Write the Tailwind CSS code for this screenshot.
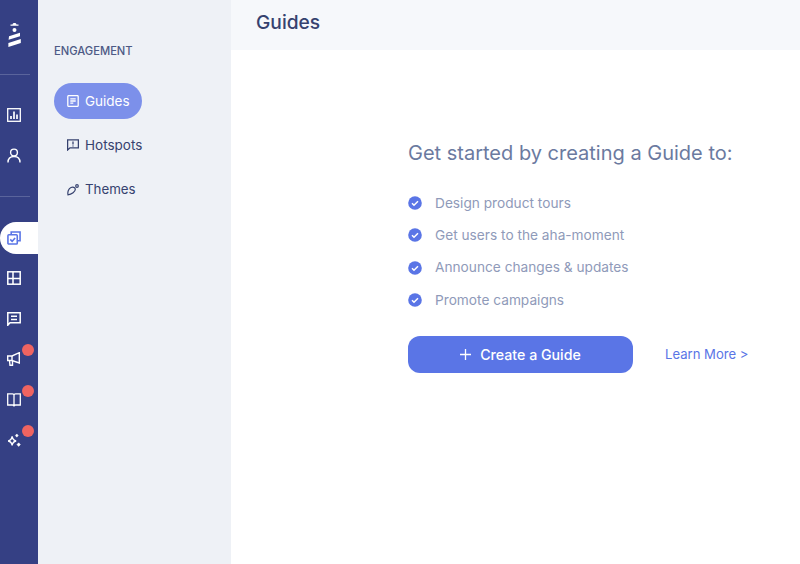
<!DOCTYPE html>
<html lang="en">
<head>
  <meta charset="UTF-8" />
  <title>Guides</title>
  <script src="https://cdn.jsdelivr.net/npm/@tailwindcss/browser@4"></script>
</head>
<body class="font-['Inter',sans-serif] bg-white">
<div class="flex h-[564px] w-[800px] overflow-hidden">

  <!-- icon rail -->
  <div class="w-[38px] shrink-0 bg-[#354084] flex flex-col">
    <div class="h-[75px] mr-2 border-b border-[#5a649c] flex items-start justify-center pr-[2px] pt-[22px] shrink-0">
      <svg width="13" height="25" viewBox="0 0 13 25" fill="#fff">
        <path d="M2.500 3.800H10.500V2.400H8.500C8 .6 5 .6 4.500 2.400H2.500Z"/>
        <path d="M6.500 6A2 2 0 1 1 6.490 10A2 2 0 1 1 6.500 6Z"/>
        <path d="M1 14.200L12 10.800V14.200L.6 17.800Z"/>
        <path d="M.4 21L12.800 17V21L.4 25Z"/>
      </svg>
    </div>
    <div class="h-[122px] mr-2 border-b border-[#5a649c] flex flex-col items-center pr-[2px] pt-[33px] gap-[26px] shrink-0">
      <svg width="14" height="14" viewBox="0 0 14 14" fill="none" stroke="#fff" stroke-width="1.300"><rect x=".7" y=".7" width="12.600" height="12.600"/><path d="M4 11V8M7 11V3.500M10 11V6.500" stroke-width="1.700"/></svg>
      <svg width="14" height="15" viewBox="0 0 14 15" fill="none" stroke="#fff" stroke-width="1.400"><circle cx="7" cy="4.500" r="3.400"/><path d="M1 14.500C1 10.500 3.500 8.500 7 8.500S13 10.500 13 14.500"/></svg>
    </div>

    <!-- active tab -->
    <div class="mt-[25px] h-[32px] w-[38px] bg-white rounded-l-[16px] flex items-center justify-center pr-[10px] shrink-0">
      <svg width="14" height="14" viewBox="0 0 15 15" fill="none" stroke="#5a75e6" stroke-width="1.700"><path d="M4.500 3.500V1h9.500v9.500H11.500"/><rect x="1" y="4" width="10" height="10" rx="1"/><path d="M3.500 9l2 2 3.200-3.600"/></svg>
    </div>

    <div class="flex flex-col items-center pr-[10px] mt-[17px] gap-[26.500px]">
      <svg width="14" height="14" viewBox="0 0 14 14" fill="none" stroke="#fff" stroke-width="1.500"><rect x=".8" y=".8" width="12.400" height="12.400"/><path d="M6 .8v12.400M.8 7.500H13.200"/></svg>
      <svg width="14" height="14" viewBox="0 0 14 14" fill="none" stroke="#fff" stroke-width="1.500"><path d="M.8.800h12.400v10H3L.8 13.200Z"/><path d="M4 4.200h6M4 7.400h6"/></svg>
      <div class="relative flex justify-center w-[14px] h-[14px]">
        <svg width="14" height="14" viewBox="0 0 14 14" fill="none" stroke="#fff" stroke-width="1.400"><path d="M.7 4H5l7.300-3.300V11L5 8.500H.7Z"/><path d="M2.500 8.500L3 13.300H5.500V8.500M5 4v4.500"/></svg>
        <span class="absolute left-[15px] top-[-8px] w-[12px] h-[12px] rounded-full bg-[#ef6461]"></span>
      </div>
      <div class="relative flex justify-center w-[14px] h-[14px]">
        <svg width="14" height="14" viewBox="0 0 14 14" fill="none" stroke="#fff" stroke-width="1.300"><path d="M.7.800H5.500C6.400.8 7 1.400 7 2.300V13.400C7 12.600 6.400 12 5.500 12H.7ZM13.300.8H8.500C7.600.8 7 1.400 7 2.300V13.400C7 12.600 7.600 12 8.500 12H13.300Z"/></svg>
        <span class="absolute left-[15px] top-[-8px] w-[12px] h-[12px] rounded-full bg-[#ef6461]"></span>
      </div>
      <div class="relative flex justify-center w-[14px] h-[14px]">
        <svg width="15" height="15" viewBox="0 0 15 15" fill="none" stroke="#fff" stroke-width="1.500"><path d="M5.500 3.200C6 6.200 6.800 7.500 9.800 8C6.800 8.500 6 9.800 5.500 12.800C5 9.800 4.200 8.500 1.200 8C4.200 7.500 5 6.200 5.500 3.200Z"/><path d="M10.500 .5L12 2.200L10.500 3.900L9 2.200ZM12.500 10L14.300 11.900L12.500 13.800L10.700 11.900Z" fill="#fff" stroke-width=".6"/></svg>
        <span class="absolute left-[15px] top-[-8px] w-[12px] h-[12px] rounded-full bg-[#ef6461]"></span>
      </div>
    </div>
  </div>

  <!-- secondary nav -->
  <div class="w-[193px] shrink-0 bg-[#eef1f6] pl-[16px]">
    <div class="mt-[44px] text-[11.200px] leading-[14px] font-medium text-[#4d5a85]">ENGAGEMENT</div>
    <div class="mt-[25px] flex flex-col gap-[8px]">
      <div class="h-[36px] w-[88px] rounded-full bg-[#7c90ea] flex items-center pl-[13px] gap-[6px] text-white text-[13.500px]">
        <svg width="12" height="12" viewBox="0 0 12 12" fill="none" stroke="#fff" stroke-width="1.300"><rect x=".8" y=".6" width="10.400" height="10.800" rx="1"/><path d="M3.300 3.800h5.400M3.300 6h5.400M3.300 8.200h3"/></svg>
        Guides
      </div>
      <div class="h-[36px] flex items-center pl-[13px] gap-[6px] text-[#36426f] text-[13.500px]">
        <svg width="12" height="12" viewBox="0 0 12 12" fill="none" stroke="#36426f" stroke-width="1.300"><path d="M.6.800h10.800v8H3L.6 11Z"/><path d="M6 2.500v3M6 6.500v1"/></svg>
        Hotspots
      </div>
      <div class="h-[36px] pt-[1px] flex items-center pl-[13px] gap-[6px] text-[#36426f] text-[13.300px]">
        <svg width="12" height="12" viewBox="0 0 12 12" fill="none" stroke="#36426f" stroke-width="1.200"><path d="M1 10.800C.4 8 1.500 4.500 4 3.500C6 2.700 8 3.300 8.300 5C8.600 7.500 4.500 10.800 1 10.800Z"/><circle cx="10" cy="2" r="1.300"/></svg>
        Themes
      </div>
    </div>
  </div>

  <!-- main -->
  <div class="flex-1 flex flex-col">
    <div class="h-[50px] bg-[#f6f8fb] pl-[25px] pb-[5px] flex items-center text-[19.200px] font-medium text-[#36426f]">Guides</div>
    <div class="pl-[177px] pt-[90px]">
      <div class="text-[20px] leading-[26px] text-[#6b7a9f]">Get started by creating a Guide to:</div>
      <div class="mt-[27px] flex flex-col gap-[12.300px] text-[13.700px] text-[#8f9ab9]">
        <div class="h-[20px] flex items-center gap-[13px]"><svg width="14" height="14" viewBox="0 0 14 14"><circle cx="7" cy="7" r="6.800" fill="#5a75e6"/><path d="M4 7.200l2 2 4-4" fill="none" stroke="#fff" stroke-width="1.500"/></svg>Design product tours</div>
        <div class="h-[20px] flex items-center gap-[13px]"><svg width="14" height="14" viewBox="0 0 14 14"><circle cx="7" cy="7" r="6.800" fill="#5a75e6"/><path d="M4 7.200l2 2 4-4" fill="none" stroke="#fff" stroke-width="1.500"/></svg>Get users to the aha-moment</div>
        <div class="h-[20px] flex items-center gap-[13px]"><svg width="14" height="14" viewBox="0 0 14 14"><circle cx="7" cy="7" r="6.800" fill="#5a75e6"/><path d="M4 7.200l2 2 4-4" fill="none" stroke="#fff" stroke-width="1.500"/></svg>Announce changes &amp; updates</div>
        <div class="h-[20px] flex items-center gap-[13px]"><svg width="14" height="14" viewBox="0 0 14 14"><circle cx="7" cy="7" r="6.800" fill="#5a75e6"/><path d="M4 7.200l2 2 4-4" fill="none" stroke="#fff" stroke-width="1.500"/></svg>Promote campaigns</div>
      </div>
      <div class="mt-[26px] flex items-center gap-[32px]">
        <div class="w-[225px] h-[37px] rounded-[12px] bg-[#5a75e6] flex items-center justify-center gap-[9px] text-white text-[14.200px] font-medium">
          <svg width="11" height="11" viewBox="0 0 11 11" stroke="#fff" stroke-width="1.300"><path d="M5.500 0v11M0 5.500h11"/></svg>
          Create a Guide
        </div>
        <div class="pt-[1px] text-[13.100px] text-[#5a75e6]">Learn More &gt;</div>
      </div>
    </div>
  </div>
</div>
</body>
</html>
